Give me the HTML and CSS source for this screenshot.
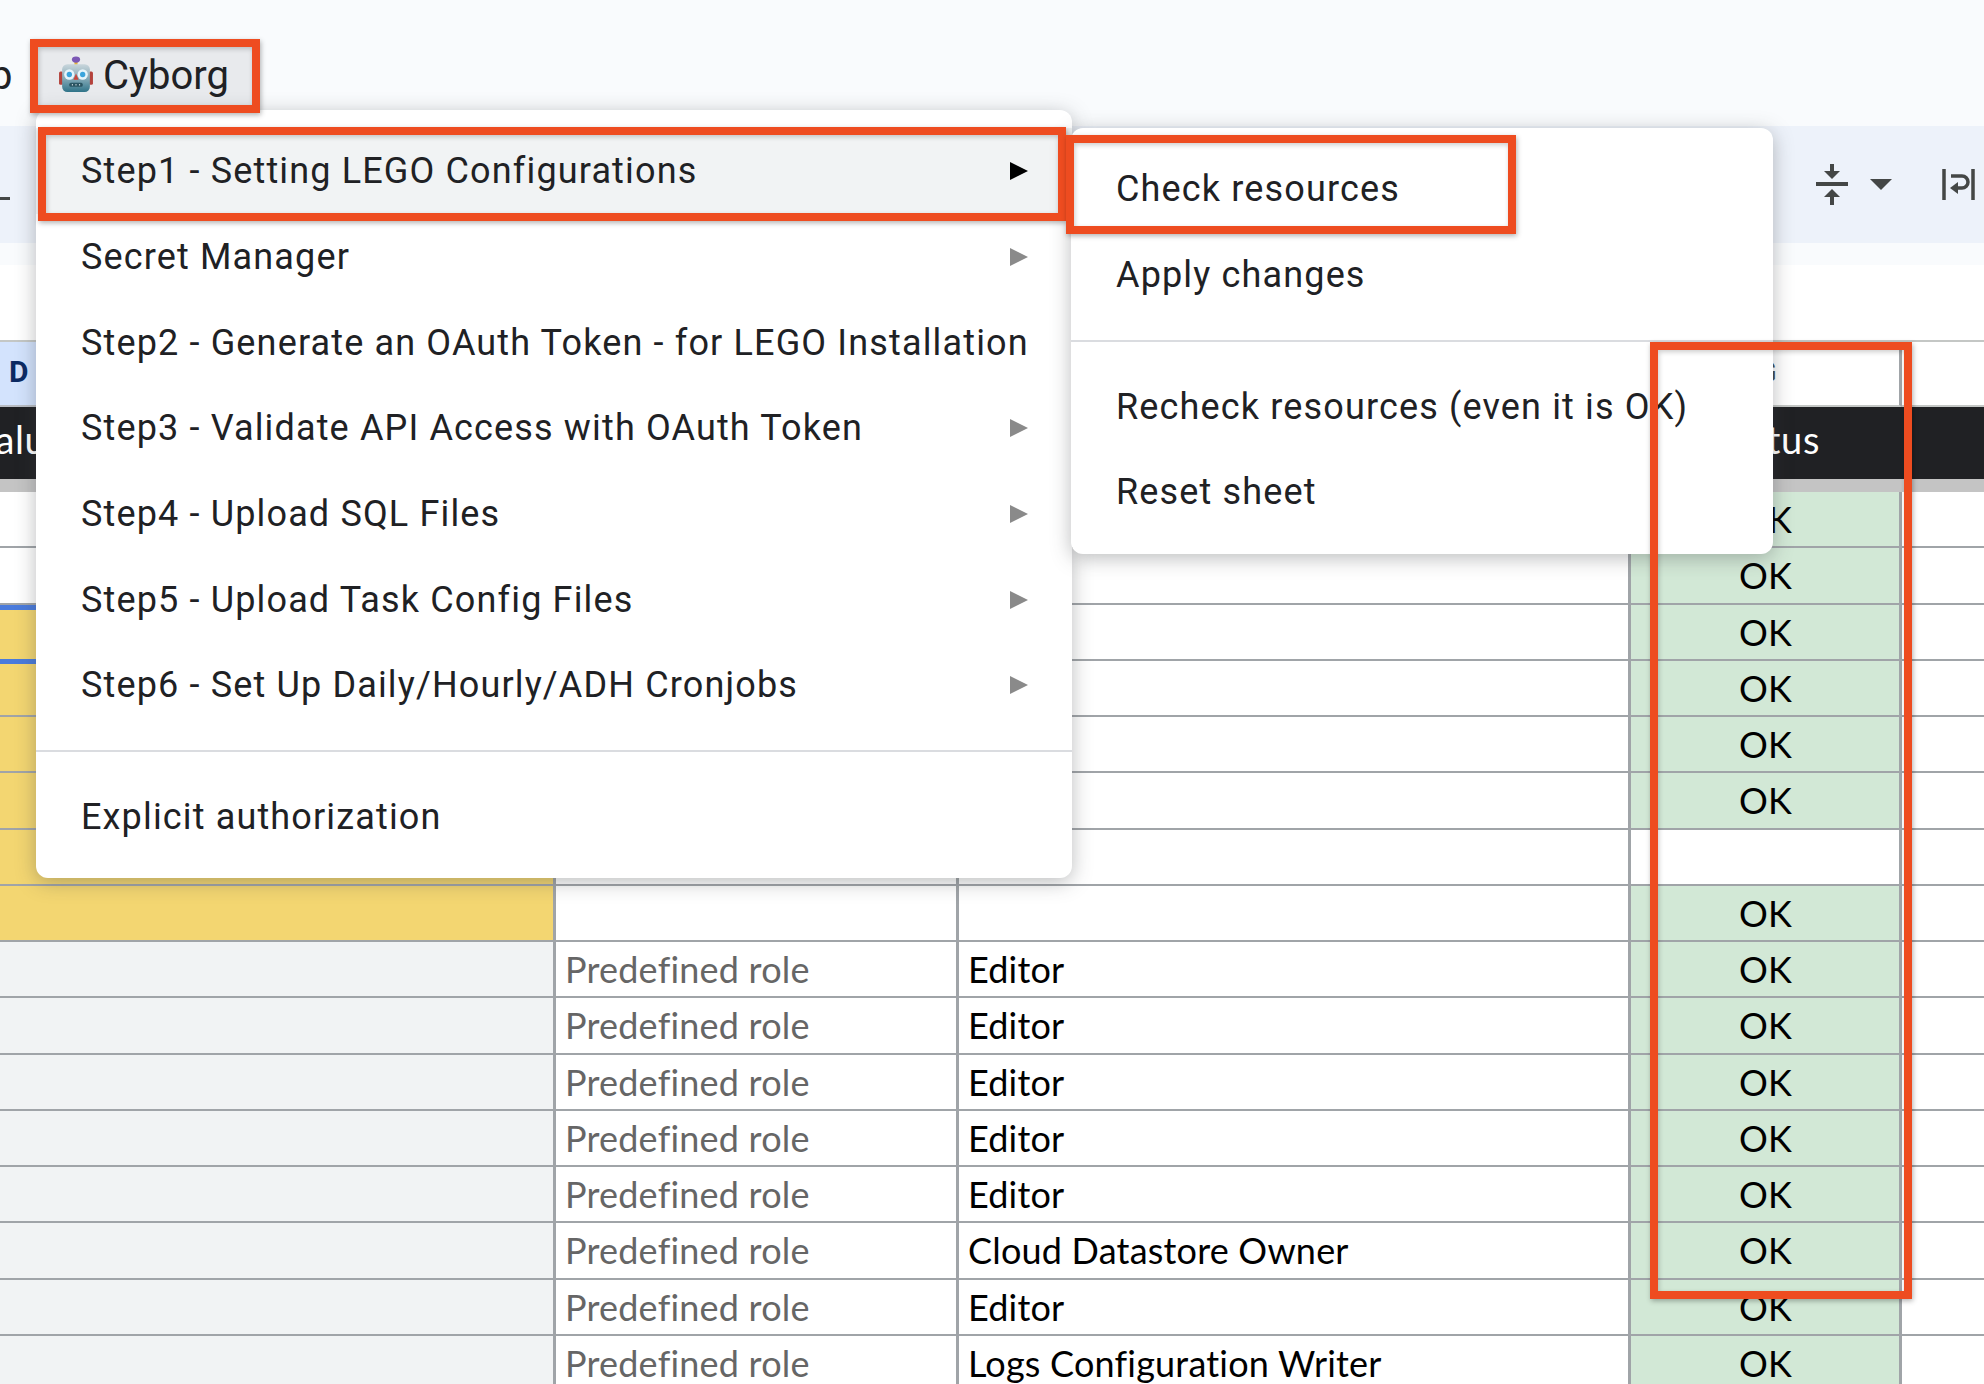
FILE: index.html
```html
<!DOCTYPE html>
<html lang="en">
<head>
    <meta charset="UTF-8">
    <title>Cyborg menu</title>
    <link rel="stylesheet" href="styles.css">
</head>
<body>
    <div class="page">
        <div class="menubar">
            <span class="menubar-word">p</span>
            <div class="menubar-item">
                <svg class="robot" viewBox="0 0 33 36" width="34" height="37">
                    <defs>
                        <linearGradient id="head" x1="0" y1="0" x2="0" y2="1">
                            <stop offset="0" stop-color="#c9d6dc"/>
                            <stop offset="0.55" stop-color="#7fa6b4"/>
                            <stop offset="1" stop-color="#2f7388"/>
                        </linearGradient>
                    </defs>
                    <rect x="0" y="15" width="4" height="13" rx="1.5" fill="#b4423c"/>
                    <rect x="29" y="15" width="4" height="13" rx="1.5" fill="#b4423c"/>
                    <rect x="15" y="4" width="3" height="6" fill="#e3b23c"/>
                    <ellipse cx="16.5" cy="3.5" rx="4" ry="3" fill="#7b57b5"/>
                    <rect x="3" y="8" width="27" height="27" rx="5" fill="url(#head)"/>
                    <circle cx="10" cy="18" r="5" fill="#e6f4fa"/>
                    <circle cx="23" cy="18" r="5" fill="#e6f4fa"/>
                    <circle cx="10" cy="18" r="2.6" fill="#3aa4dc"/>
                    <circle cx="23" cy="18" r="2.6" fill="#3aa4dc"/>
                    <path d="M16.5 17l2.5 6h-5z" fill="#c8463c"/>
                    <rect x="10" y="26" width="13" height="4" rx="1.5" fill="#2b5563"/>
                    <path d="M12.500 28h1M16 28h1M19.500 28h1" stroke="#c9d6dc" stroke-width="1.500"/>
                </svg>
                <span>Cyborg</span>
            </div>
        </div>

        <div class="toolbar">
            <span class="toolbar-dash"></span>
            <div class="toolbar-right">
                <svg viewBox="0 0 32 41" width="32" height="41">
                    <path d="M0 20h32" stroke="#444746" stroke-width="4"/>
                    <path d="M16 0v9" stroke="#444746" stroke-width="4"/>
                    <path d="M8 7h16l-8 8z" fill="#444746"/>
                    <path d="M16 32v9" stroke="#444746" stroke-width="4"/>
                    <path d="M8 33h16l-8-8z" fill="#444746"/>
                </svg>
                <span class="toolbar-caret"></span>
                <svg viewBox="0 0 33 31" width="33" height="31">
                    <path d="M2 0v31M31 0v31" stroke="#444746" stroke-width="3.500"/>
                    <path d="M9 7h11a5 5 0 0 1 0 12h-6" fill="none" stroke="#444746" stroke-width="3.500"/>
                    <path d="M16 13v12l-8-6z" fill="#444746"/>
                </svg>
            </div>
        </div>
        <div class="toolbar-gap"></div>
        <div class="formula-bar"></div>

        <div class="sheet">
            <div class="col-head col-head-on">D</div>
            <div class="col-head">E</div>
            <div class="col-head">F</div>
            <div class="col-head col-head-mid">G</div>
            <div class="col-head"></div>

            <div class="title-cell title-left">Value</div>
            <div class="title-cell"></div>
            <div class="title-cell"></div>
            <div class="title-cell title-mid">Status</div>
            <div class="title-cell"></div>

            <div class="title-band"></div>

            <div class="cell"></div><div class="cell"></div><div class="cell"></div><div class="cell ok">OK</div><div class="cell end"></div>
            <div class="cell"></div><div class="cell"></div><div class="cell"></div><div class="cell ok">OK</div><div class="cell end"></div>
            <div class="cell yellow picked"></div><div class="cell"></div><div class="cell"></div><div class="cell ok">OK</div><div class="cell end"></div>
            <div class="cell yellow"></div><div class="cell"></div><div class="cell"></div><div class="cell ok">OK</div><div class="cell end"></div>
            <div class="cell yellow"></div><div class="cell"></div><div class="cell"></div><div class="cell ok">OK</div><div class="cell end"></div>
            <div class="cell yellow"></div><div class="cell"></div><div class="cell"></div><div class="cell ok">OK</div><div class="cell end"></div>
            <div class="cell yellow"></div><div class="cell"></div><div class="cell"></div><div class="cell"></div><div class="cell end"></div>
            <div class="cell yellow"></div><div class="cell"></div><div class="cell"></div><div class="cell ok">OK</div><div class="cell end"></div>
            <div class="cell grey"></div><div class="cell type">Predefined role</div><div class="cell">Editor</div><div class="cell ok">OK</div><div class="cell end"></div>
            <div class="cell grey"></div><div class="cell type">Predefined role</div><div class="cell">Editor</div><div class="cell ok">OK</div><div class="cell end"></div>
            <div class="cell grey"></div><div class="cell type">Predefined role</div><div class="cell">Editor</div><div class="cell ok">OK</div><div class="cell end"></div>
            <div class="cell grey"></div><div class="cell type">Predefined role</div><div class="cell">Editor</div><div class="cell ok">OK</div><div class="cell end"></div>
            <div class="cell grey"></div><div class="cell type">Predefined role</div><div class="cell">Editor</div><div class="cell ok">OK</div><div class="cell end"></div>
            <div class="cell grey"></div><div class="cell type">Predefined role</div><div class="cell">Cloud Datastore Owner</div><div class="cell ok">OK</div><div class="cell end"></div>
            <div class="cell grey"></div><div class="cell type">Predefined role</div><div class="cell">Editor</div><div class="cell ok">OK</div><div class="cell end"></div>
            <div class="cell grey"></div><div class="cell type">Predefined role</div><div class="cell">Logs Configuration Writer</div><div class="cell ok">OK</div><div class="cell end"></div>
        </div>

        <!-- dropdown menus -->
        <div class="menu menu-main">
            <div class="menu-item active">Step1 - Setting LEGO Configurations<span class="arrow"></span></div>
            <div class="menu-item">Secret Manager<span class="arrow"></span></div>
            <div class="menu-item">Step2 - Generate an OAuth Token - for LEGO Installation</div>
            <div class="menu-item">Step3 - Validate API Access with OAuth Token<span class="arrow"></span></div>
            <div class="menu-item">Step4 - Upload SQL Files<span class="arrow"></span></div>
            <div class="menu-item">Step5 - Upload Task Config Files<span class="arrow"></span></div>
            <div class="menu-item">Step6 - Set Up Daily/Hourly/ADH Cronjobs<span class="arrow"></span></div>
            <div class="menu-sep"></div>
            <div class="menu-item">Explicit authorization</div>
        </div>
        <div class="menu menu-sub">
            <div class="menu-item">Check resources</div>
            <div class="menu-item">Apply changes</div>
            <div class="menu-sep"></div>
            <div class="menu-item">Recheck resources (even it is OK)</div>
            <div class="menu-item">Reset sheet</div>
        </div>

        <!-- orange callouts -->
        <div class="mark mark-cyborg"></div>
        <div class="mark mark-step"></div>
        <div class="mark mark-check"></div>
        <div class="mark mark-status"></div>
    </div>
</body>
</html>
```

FILE: styles.css
```css
* {
    margin: 0;
    padding: 0;
    box-sizing: border-box;
}

body {
    font-family: 'Roboto', sans-serif;
    background: #fff;
    color: #202124;
}

.page {
    position: relative;
    width: 1984px;
    height: 1384px;
    overflow: hidden;
}

/* top bars */
.menubar {
    height: 126px;
    background: #f9fbfd;
    display: flex;
    align-items: flex-start;
    padding-top: 47px;
}

.menubar-word {
    font-size: 40px;
    line-height: 58px;
    margin-left: -10px;
    width: 48px;
}

.menubar-item {
    width: 214px;
    height: 58px;
    background: #e8eaed;
    display: flex;
    align-items: center;
    gap: 10px;
    padding-left: 21px;
    padding-bottom: 2px;
    font-size: 40px;
}

.robot {
    margin-top: -2px;
}

.toolbar {
    height: 117px;
    background: #edf2fa;
    display: flex;
    align-items: center;
}

.toolbar-dash {
    width: 10px;
    height: 3px;
    margin-top: 28px;
    background: #444746;
}

.toolbar-right {
    margin-left: auto;
    margin-right: 9px;
    display: flex;
    align-items: center;
    gap: 22px;
}

.toolbar-caret {
    width: 0;
    height: 0;
    margin-right: 28px;
    border-left: 11px solid transparent;
    border-right: 11px solid transparent;
    border-top: 11px solid #444746;
}

.toolbar-gap {
    height: 22px;
    background: #f9fbfd;
}

.formula-bar {
    height: 75px;
    background: #fff;
}

/* spreadsheet */
.sheet {
    display: grid;
    grid-template-columns: 556px 403px 672px 271px 82px;
    grid-auto-rows: 56.25px;
    grid-template-rows: 65px 72px 13px;
    border-top: 2px solid #c4c7c5;
    font-size: 36px;
    letter-spacing: 0.2px;
    font-family: 'Lato', sans-serif;
    color: #000;
}

.col-head {
    background: #fff;
    border-bottom: 2px solid #c4c7c5;
    font-family: 'Roboto', sans-serif;
    font-size: 30px;
    font-weight: 500;
    color: #444746;
    line-height: 60px;
    padding-left: 9px;
}

.col-head-on {
    background: #d3e3fd;
    color: #0b2a63;
    font-weight: 700;
    border-bottom-color: #b9bdc4;
}

.col-head-mid {
    text-align: center;
    padding-left: 3px;
    border-right: 3px solid #a0a4a8;
}

.title-cell {
    background: #202124;
    color: #fff;
    font-size: 38px;
    letter-spacing: 0.6px;
    line-height: 64px;
    white-space: nowrap;
    overflow: hidden;
}

.title-left {
    text-indent: -28px;
}

.title-mid {
    text-align: center;
}

.title-band {
    grid-column: 1 / -1;
    background: #c4c4c4;
}

.cell {
    background: #fff;
    border-right: 3px solid #a0a4a8;
    border-bottom: 2px solid #a0a4a8;
    padding-left: 9px;
    line-height: 55px;
    white-space: nowrap;
}

.cell.end {
    border-right: none;
}

.yellow {
    background: #f3d671;
}

.grey {
    background: #f1f3f4;
}

.picked {
    position: relative;
    border-bottom-color: #4a7bdc;
    box-shadow: inset 0 5px 0 #4a7bdc, 0 3px 0 #4a7bdc;
}

.type {
    color: #666;
}

.ok {
    background: #d2e8d6;
    text-align: center;
    padding-left: 1px;
}

/* dropdown menus */
.menu {
    position: absolute;
    background: #fff;
    border-radius: 12px;
    box-shadow: 0 4px 20px rgba(60, 64, 67, 0.35);
    padding: 18px 0;
    font-size: 36px;
    letter-spacing: 1.15px;
    color: #202124;
}

.menu-main {
    left: 36px;
    top: 110px;
    width: 1036px;
    height: 768px;
}

.menu-sub {
    left: 1071px;
    top: 128px;
    width: 702px;
    height: 426px;
}

.menu-item {
    height: 85.7px;
    display: flex;
    align-items: center;
    justify-content: space-between;
    padding: 1px 44px 0 45px;
    white-space: nowrap;
}

.menu-item.active {
    background: #f1f3f4;
}

.menu-sep {
    height: 2px;
    margin: 22px 0;
    background: #dadce0;
}

.menu-sub .menu-sep {
    margin: 23px 0 21px;
}

.arrow {
    width: 0;
    height: 0;
    border-top: 9px solid transparent;
    border-bottom: 9px solid transparent;
    border-left: 18px solid #8a8a8a;
}

.active .arrow {
    border-left-color: #000;
}

/* callouts */
.mark {
    position: absolute;
    border: 8px solid #ee4c20;
    box-shadow: 1px 2px 5px rgba(0, 0, 0, 0.3), inset 1px 2px 5px rgba(0, 0, 0, 0.2);
}

.mark-cyborg {
    left: 30px;
    top: 39px;
    width: 230px;
    height: 74px;
}

.mark-step {
    left: 38px;
    top: 127px;
    width: 1028px;
    height: 94px;
}

.mark-check {
    left: 1066px;
    top: 135px;
    width: 450px;
    height: 99px;
}

.mark-status {
    left: 1650px;
    top: 342px;
    width: 262px;
    height: 957px;
}
```
